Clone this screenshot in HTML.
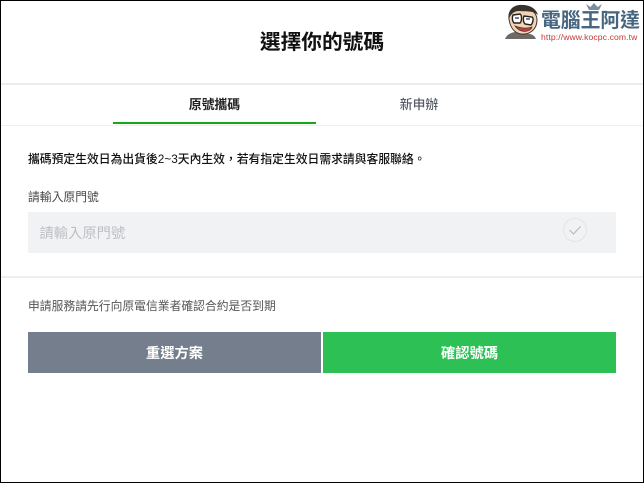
<!DOCTYPE html>
<html lang="zh-Hant">
<head>
<meta charset="utf-8">
<style>
html,body{margin:0;padding:0;background:#fff}
#p{position:relative;width:644px;height:483px;overflow:hidden;background:#fff;font-family:"Liberation Sans","Noto Sans CJK TC",sans-serif;color:#1e1e1e}
#p div{position:absolute;white-space:nowrap}
.t{line-height:20px}
</style>
</head>
<body>
<div id="p">
  <div class="t" style="left:0;width:644px;top:33px;text-align:center;font-size:20.7px;font-weight:700;color:#111">選擇你的號碼</div>
  <div style="left:1px;right:1px;top:83px;height:2px;background:#ececec"></div>

  <div class="t" style="left:113px;width:203px;top:95px;text-align:center;font-size:12.8px;font-weight:700;color:#222">原號攜碼</div>
  <div class="t" style="left:316px;width:206px;top:95px;text-align:center;font-size:12.8px;font-weight:500;color:#555b64">新申辦</div>
  <div style="left:1px;right:1px;top:125px;height:1px;background:#efefef"></div>
  <div style="left:113px;width:203px;top:122px;height:2px;background:#12a912"></div>

  <div class="t" style="left:28px;top:149px;font-size:11.8px;font-weight:500;color:#111">攜碼預定生效日為出貨後2~3天內生效&#xFF0C;若有指定生效日需求請與客服聯絡。</div>
  <div class="t" style="left:28px;top:187px;font-size:11.8px;color:#444">請輸入原門號</div>

  <div style="left:28px;top:212px;width:588px;height:41px;background:#f1f2f4"></div>
  <div class="t" style="left:39.5px;top:224px;font-size:14.3px;color:#bdbfc3">請輸入原門號</div>
  <svg style="position:absolute;left:562px;top:218px" width="26" height="26" viewBox="0 0 26 26">
    <circle cx="13" cy="12" r="11.5" fill="none" stroke="#e3e4e6" stroke-width="1"/>
    <path d="M7.5 12 L11.5 16 L18.5 8.5" fill="none" stroke="#b4b6ba" stroke-width="1"/>
  </svg>

  <div style="left:1px;right:1px;top:276px;height:2px;background:#eeeeee"></div>
  <div class="t" style="left:28px;top:296px;font-size:11.8px;color:#555">申請服務請先行向原電信業者確認合約是否到期</div>

  <div class="t" style="left:28px;top:332px;width:293px;height:41px;line-height:44px;background:#757e8d;color:#fff;text-align:center;font-size:14.3px;font-weight:700">重選方案</div>
  <div class="t" style="left:323px;top:332px;width:293px;height:41px;line-height:44px;background:#2cc055;color:#fff;text-align:center;font-size:14.3px;font-weight:700">確認號碼</div>

  <svg style="position:absolute;left:504px;top:2px" width="38" height="38" viewBox="0 0 38 38">
    <path d="M1 37 C3 32 8 30 13 30 L26 32 C30 33 31 35 32 37 Z" fill="#6d6a66"/>
    <path d="M5 17 C4 9 10 4 18 5 C26 6 33 10 33 18 C33 27 26 33 17 32 C10 31 6 25 5 17 Z" fill="#f2d3b4" stroke="#3b3530" stroke-width="1"/>
    <path d="M5 17 C3 9 9 2 19 3 C25 3 32 6 34 13 C28 8 22 10 15 9 C11 9 7 11 5 17 Z" fill="#39332e"/>
    <path d="M9 13 L16 12 C18 13 18 19 16 21 L10 21 C8 19 8 15 9 13 Z M20 14 L28 15 C30 16 29 21 27 23 L21 22 C19 20 19 16 20 14 Z" fill="#fff" stroke="#222" stroke-width="1.4"/>
    <path d="M11 16 H15 M22 17 H26" stroke="#333" stroke-width="1.2"/>
    <path d="M11 24 C16 26 22 27 28 25 C26 31 16 31 11 24 Z" fill="#c63f3a" stroke="#3b3530" stroke-width=".7"/>
  </svg>
  <svg style="position:absolute;left:584px;top:3px" width="20" height="9" viewBox="0 0 20 9">
    <path d="M2 1 L5 7 H15 L18 1 L13.5 4 L10 0 L6.5 4 Z" fill="#7d8ea0"/>
  </svg>
  <div style="left:541px;top:9px;font-size:19.8px;line-height:24px;font-weight:700;color:#46657f">電腦王阿達</div>
  <div style="left:541px;top:32px;font-size:8.6px;line-height:10px;color:#c23a34;letter-spacing:.1px">http://www.kocpc.com.tw</div>

  <div style="left:0;top:0;width:644px;height:1px;background:#000"></div>
  <div style="left:0;top:482px;width:644px;height:1px;background:#000"></div>
  <div style="left:0;top:0;width:1px;height:483px;background:#000"></div>
  <div style="left:643px;top:0;width:1px;height:483px;background:#000"></div>
</div>
</body>
</html>
